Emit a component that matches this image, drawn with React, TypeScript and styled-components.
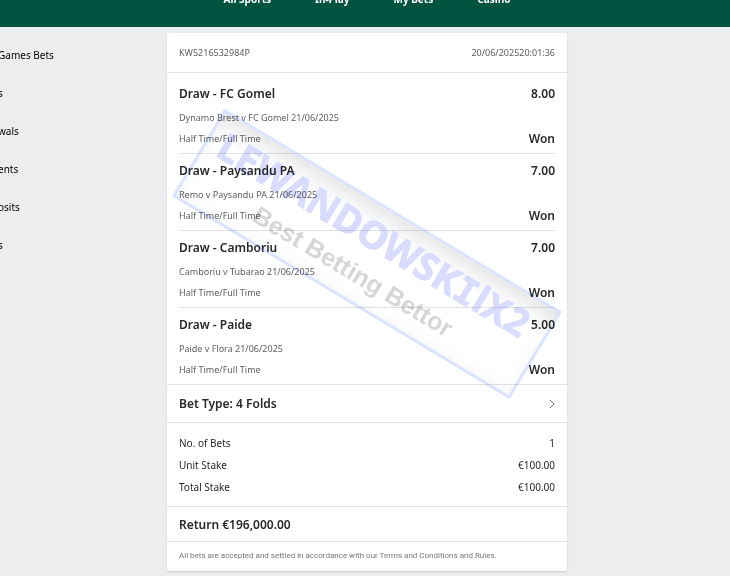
import React from "react";
import styled, { createGlobalStyle } from "styled-components";

const GlobalStyle = createGlobalStyle`
  *, *::before, *::after { box-sizing: border-box; }
  html, body { height: 100%; }
  body {
    margin: 0;
    overflow: hidden;
    background: #ebedee;
    color: #282828;
    font-family: "Noto Sans", "Open Sans", sans-serif;
    font-size: 10px;
  }
  #root { height: 100%; }
`;

const Header = styled.header`
  display: flex;
  justify-content: center;
  height: 27px;
  overflow: hidden;
  background: #00543f;
`;

const Nav = styled.nav`
  display: flex;
  gap: 44px;
  margin-top: -10px;
  padding-left: 4px;
`;

const NavLink = styled.a`
  color: #fff;
  font-size: 10px;
  font-weight: 700;
  line-height: 18px;
  text-decoration: none;
  white-space: nowrap;
`;

const Layout = styled.div`
  display: grid;
  grid-template-columns: minmax(0, 1fr) minmax(0, 400px) minmax(0, 1fr);
  padding: 6px 0 4px 4px;
`;

const Sidebar = styled.nav`
  display: flex;
  flex-direction: column;
  gap: 20px;
  margin-left: -6px;
  padding-top: 13px;
`;

const SideLink = styled.a`
  color: #000;
  font-size: 10px;
  line-height: 18px;
  text-decoration: none;
  white-space: nowrap;
`;

const Card = styled.main`
  position: relative;
  background: #fff;
  border-radius: 2px;
  box-shadow: 0 1px 2px rgba(0, 0, 0, 0.16);
`;

const Section = styled.section<{ $pad: string }>`
  padding: ${(p) => p.$pad};
  border-bottom: 1px solid #e1e1e1;
  &:last-of-type { border-bottom: 0; }
`;

const Row = styled.div`
  display: flex;
  align-items: center;
  justify-content: space-between;
`;

const Meta = styled.span`
  color: #606060;
  font-size: 9px;
  line-height: 20px;
`;

const Strong = styled.span`
  font-size: 12px;
  font-weight: 600;
  line-height: 22px;
`;

const Bet = styled.article`
  padding: 10px 0 3px;
  & + & {
    padding-top: 6px;
    border-top: 1px solid #e1e1e1;
  }
`;

const Match = styled.p`
  margin: 3px 0 0;
  color: #606060;
  font-size: 9px;
  line-height: 20px;
`;

const BetTypeButton = styled.button`
  display: flex;
  align-items: center;
  justify-content: space-between;
  width: 100%;
  padding: 0;
  border: 0;
  background: none;
  color: inherit;
  font: inherit;
  cursor: pointer;
`;

const Totals = styled.dl`
  margin: 0;
`;

const TotalRow = styled(Row)`
  font-size: 10px;
  line-height: 22px;
  dd { margin: 0; }
`;

const Terms = styled.p`
  margin: 0;
  color: #777;
  font-family: Roboto, sans-serif;
  font-size: 8px;
  line-height: 18px;
`;

const Watermark = styled.div`
  position: absolute;
  top: 221px;
  left: 50%;
  width: 394px;
  height: 102px;
  transform: translate(-50%, -50%) rotate(31deg);
  border: 3px solid #dbe3ff;
  background: linear-gradient(rgba(0, 0, 0, 0.07), rgba(0, 0, 0, 0) 30%) padding-box;
  box-shadow: inset 0 0 16px rgba(0, 0, 0, 0.05);
  mix-blend-mode: multiply;
  text-align: center;
  pointer-events: none;
`;

const WatermarkName = styled.div`
  color: #d9dcff;
  font: 700 38px/46px "Noto Sans", sans-serif;
  -webkit-text-stroke: 1px #d9dcff;
  text-shadow: 0 0 4px #fff;
  padding: 4px 8px 0 0;
  white-space: nowrap;
`;

const SerifI = styled.span`
  font-family: "DejaVu Sans Mono", monospace;
  font-size: 37px;
`;

const WatermarkTag = styled.div`
  padding: 2px 6px 0 0;
  color: #d6d6d6;
  font: 700 25px/30px "Liberation Sans", sans-serif;
`;

const bets = [
  { pick: "Draw - FC Gomel", odds: "8.00", match: "Dynamo Brest v FC Gomel 21/06/2025" },
  { pick: "Draw - Paysandu PA", odds: "7.00", match: "Remo v Paysandu PA 21/06/2025" },
  { pick: "Draw - Camboriu", odds: "7.00", match: "Camboriu v Tubarao 21/06/2025" },
  { pick: "Draw - Paide", odds: "5.00", match: "Paide v Flora 21/06/2025" },
];

const totals = [
  ["No. of Bets", "1"],
  ["Unit Stake", "€100.00"],
  ["Total Stake", "€100.00"],
];

export default function App() {
  return (
    <>
      <GlobalStyle />
      <Header>
        <Nav>
          {["All Sports", "In-Play", "My Bets", "Casino"].map((label) => (
            <NavLink href="#" key={label}>{label}</NavLink>
          ))}
        </Nav>
      </Header>
      <Layout>
        <Sidebar>
          {["Games Bets", "s", "wals", "ents", "osits", "s"].map((label, i) => (
            <SideLink href="#" key={i}>{label}</SideLink>
          ))}
        </Sidebar>
        <Card>
          <Section $pad="10px 12px 9px">
            <Row>
              <Meta>KW5216532984P</Meta>
              <Meta>20/06/202520:01:36</Meta>
            </Row>
          </Section>
          <Section $pad="0 12px 0">
            {bets.map((bet) => (
              <Bet key={bet.pick}>
                <Row>
                  <Strong>{bet.pick}</Strong>
                  <Strong>{bet.odds}</Strong>
                </Row>
                <Match>{bet.match}</Match>
                <Row>
                  <Meta>Half Time/Full Time</Meta>
                  <Strong>Won</Strong>
                </Row>
              </Bet>
            ))}
          </Section>
          <Section $pad="8px 12px 7px">
            <BetTypeButton>
              <Strong>Bet Type: 4 Folds</Strong>
              <svg width="6" height="10" viewBox="0 0 6 10" fill="none" stroke="#777" aria-hidden="true">
                <path d="M1 1l4 4-4 4" />
              </svg>
            </BetTypeButton>
          </Section>
          <Section $pad="9px 12px 8px">
            <Totals>
              {totals.map(([label, value]) => (
                <TotalRow key={label}>
                  <dt>{label}</dt>
                  <dd>{value}</dd>
                </TotalRow>
              ))}
            </Totals>
          </Section>
          <Section $pad="7px 12px 5px">
            <Strong>Return €196,000.00</Strong>
          </Section>
          <Section $pad="5px 12px 6px">
            <Terms>All bets are accepted and settled in accordance with our Terms and Conditions and Rules.</Terms>
          </Section>
          <Watermark>
            <WatermarkName>LEWANDOWSK<SerifI>I</SerifI>lX2</WatermarkName>
            <WatermarkTag>Best Betting Bettor</WatermarkTag>
          </Watermark>
        </Card>
      </Layout>
    </>
  );
}
